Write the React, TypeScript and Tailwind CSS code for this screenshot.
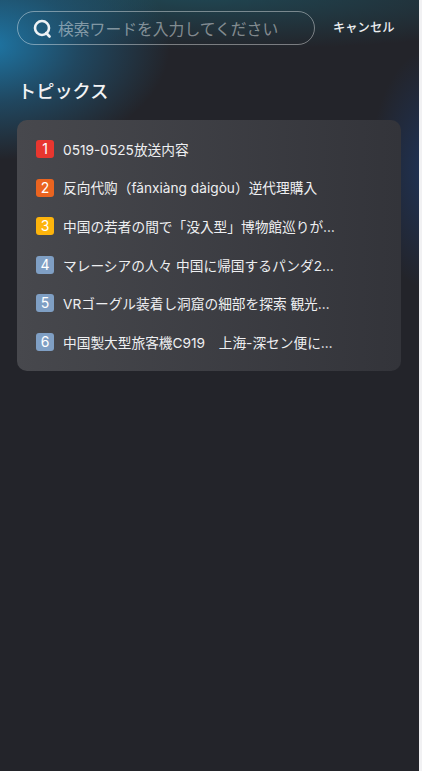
const topics = [
  { title: '0519-0525放送内容', color: 'bg-[#e8362f]' },
  { title: '反向代购（fǎnxiàng dàigòu）逆代理購入', color: 'bg-[#ea6420]' },
  { title: '中国の若者の間で「没入型」博物館巡りが…', color: 'bg-[#fdb40c]' },
  { title: 'マレーシアの人々 中国に帰国するパンダ2…', color: 'bg-[#7f9fc4]' },
  { title: 'VRゴーグル装着し洞窟の細部を探索 観光…', color: 'bg-[#7f9fc4]' },
  { title: '中国製大型旅客機C919　上海-深セン便に…', color: 'bg-[#7f9fc4]' },
]

export default function App() {
  return (
    <div className="flex h-[771px] w-[422px] bg-[#f1f1f3] font-['Inter','Noto_Sans_CJK_JP',sans-serif]">
      <div className="h-full w-[419px] bg-[#23242a] bg-[radial-gradient(ellipse_180px_115px_at_-10px_45px,#1e76a5_0%,rgba(30,100,140,0.55)_50%,rgba(35,36,42,0)_100%),radial-gradient(ellipse_400px_55px_at_200px_-5px,rgba(30,85,100,0.7)_0%,rgba(35,36,42,0)_100%),radial-gradient(ellipse_60px_120px_at_430px_170px,#1e3358_0%,rgba(35,36,42,0)_100%)]">
        {/* Search row */}
        <div className="flex items-center pl-[17px] pt-[11px]">
          <div className="flex h-[34px] w-[298px] items-center rounded-full border border-white/40 pl-[15px]">
            <svg width="19" height="19" viewBox="0 0 19 19" fill="none" className="shrink-0">
              <circle cx="9" cy="9" r="7" stroke="#eef2f5" strokeWidth="2.6" />
              <path d="M13.2 14 L16.5 17.5" stroke="#eef2f5" strokeWidth="2.6" strokeLinecap="round" />
            </svg>
            <span className="ml-[6px] pt-[3px] text-[15.8px] leading-none text-white/45">検索ワードを入力してください</span>
          </div>
          <span className="ml-[18px] pt-[1px] text-[12.3px] font-medium text-[#eceef0]">キャンセル</span>
        </div>

        <h2 className="ml-[18px] mt-[31px] text-[18.2px] font-medium leading-[30px] text-[#f2f3f5]">トピックス</h2>

        {/* Topics card */}
        <div className="ml-[17px] mt-[14px] flex h-[251px] w-[384px] flex-col justify-between rounded-[10px] bg-gradient-to-r from-[#47484d] to-[#33343a] px-[19px] py-[10px]">
          {topics.map((t, i) => (
            <div key={i} className="flex h-[38px] items-center">
              <span className={`flex h-[18px] w-[18px] shrink-0 items-center justify-center rounded-[3px] text-[14px] leading-none text-white ${t.color}`}>
                {i + 1}
              </span>
              <span className="ml-[9px] whitespace-nowrap pt-[2px] text-[13.7px] text-[#eeeff1]">{t.title}</span>
            </div>
          ))}
        </div>
      </div>
    </div>
  )
}
